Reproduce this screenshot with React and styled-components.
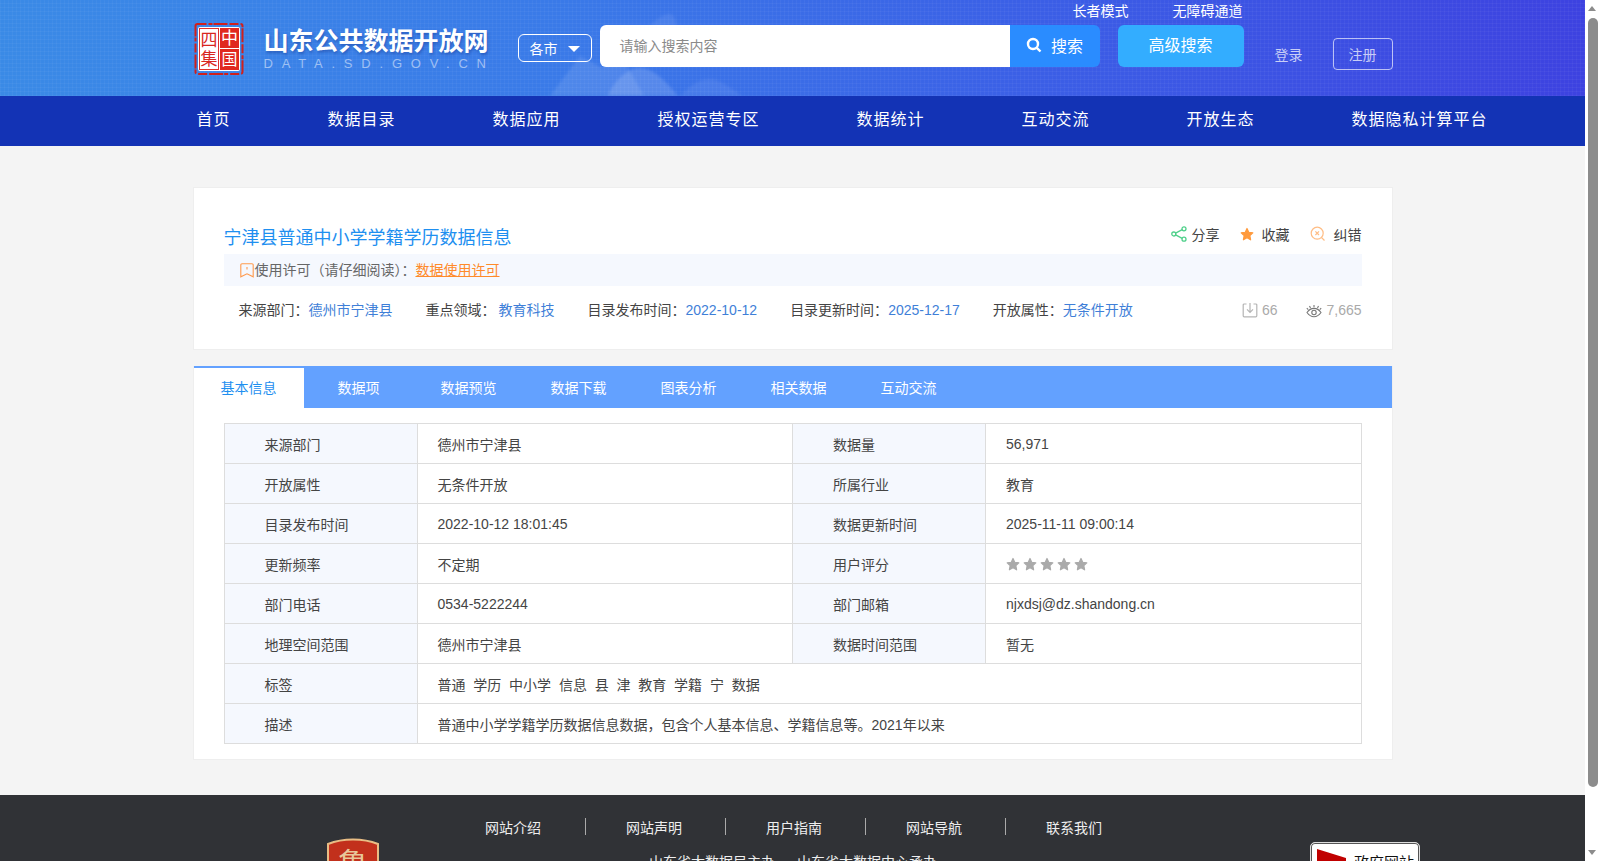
import React from "react";
import styled, { createGlobalStyle } from "styled-components";

const GlobalStyle = createGlobalStyle`
	html, body {
		margin: 0;
		height: 861px;
		overflow: hidden;
		background: #f4f4f4;
		font-family: "Liberation Sans", "Noto Sans CJK SC", sans-serif;
		font-size: 14px;
		color: #444;
	}
	* {
		box-sizing: border-box;
	}
`;

const navItems = [
	"首页",
	"数据目录",
	"数据应用",
	"授权运营专区",
	"数据统计",
	"互动交流",
	"开放生态",
	"数据隐私计算平台",
];

const tabs = ["基本信息", "数据项", "数据预览", "数据下载", "图表分析", "相关数据", "互动交流"];

const metaItems = [
	["来源部门：", "德州市宁津县"],
	["重点领域：", "教育科技"],
	["目录发布时间：", "2022-10-12"],
	["目录更新时间：", "2025-12-17"],
	["开放属性：", "无条件开放"],
];

const rows = [
	["来源部门", "德州市宁津县", "数据量", "56,971"],
	["开放属性", "无条件开放", "所属行业", "教育"],
	["目录发布时间", "2022-10-12 18:01:45", "数据更新时间", "2025-11-11 09:00:14"],
	["更新频率", "不定期", "用户评分", "stars"],
	["部门电话", "0534-5222244", "部门邮箱", "njxdsj@dz.shandong.cn"],
	["地理空间范围", "德州市宁津县", "数据时间范围", "暂无"],
];

const tags = ["普通", "学历", "中小学", "信息", "县", "津", "教育", "学籍", "宁", "数据"];

const footerLinks = ["网站介绍", "网站声明", "用户指南", "网站导航", "联系我们"];

const Shell = styled.div`
	display: flex;
	width: 1600px;
	height: 861px;
`;

const Main = styled.div`
	width: 1585px;
	height: 861px;
	overflow: hidden;
`;

const ScrollTrack = styled.div`
	position: relative;
	width: 15px;
	height: 861px;
	background: #fff;
`;

const ScrollArrow = styled.div`
	position: absolute;
	left: 3px;
	${(p) => (p.$down ? "bottom: 6px;" : "top: 6px;")}
	width: 0;
	height: 0;
	border-left: 4.5px solid transparent;
	border-right: 4.5px solid transparent;
	${(p) => (p.$down ? "border-top: 5px solid #8c8c8c;" : "border-bottom: 5px solid #8c8c8c;")}
`;

const ScrollThumb = styled.div`
	position: absolute;
	left: 3px;
	top: 18px;
	width: 10px;
	height: 769px;
	border-radius: 5px;
	background: #8c8c8c;
`;

const Header = styled.header`
	position: relative;
	height: 96px;
	overflow: hidden;
	background-color: #3a60e6;
	background-image: repeating-linear-gradient(0deg, rgba(255, 255, 255, 0.035) 0 1px, transparent 1px 4px),
		repeating-linear-gradient(90deg, rgba(255, 255, 255, 0.035) 0 1px, transparent 1px 4px),
		linear-gradient(90deg, #3a8ae6 0%, #3a7ae8 35%, #3b5fe6 65%, #3d42e0 100%);
`;

const Watermark = styled.svg`
	position: absolute;
	left: 540px;
	top: 0;
	width: 260px;
	height: 96px;
`;

const HeaderInner = styled.div`
	position: relative;
	display: flex;
	align-items: flex-start;
	width: 1200px;
	height: 96px;
	margin: 0 auto;
`;

const Seal = styled.svg`
	flex: none;
	width: 50px;
	height: 54px;
	margin: 22px 0 0 1px;
`;

const Brand = styled.div`
	flex: none;
	width: 226px;
	margin: 26px 0 0 20px;
	color: #fff;
`;

const BrandName = styled.div`
	font-size: 25px;
	line-height: 30px;
	font-weight: 700;
	white-space: nowrap;
	letter-spacing: 0;
	text-shadow: 1px 2px 3px rgba(20, 50, 140, 0.45);
`;

const BrandSub = styled.div`
	margin-top: 1px;
	font-size: 13px;
	line-height: 14px;
	letter-spacing: 8.8px;
	white-space: nowrap;
	color: rgba(255, 255, 255, 0.5);
`;

const CitySelect = styled.div`
	flex: none;
	display: flex;
	align-items: center;
	justify-content: space-between;
	width: 74px;
	height: 28px;
	margin: 34px 0 0 28px;
	padding: 0 11px;
	border: 1px solid #fff;
	border-radius: 6px;
	color: #fff;
	font-size: 14px;
`;

const Caret = styled.span`
	width: 0;
	height: 0;
	margin-top: 2px;
	border-left: 6px solid transparent;
	border-right: 6px solid transparent;
	border-top: 6px solid #fff;
`;

const SearchArea = styled.div`
	flex: none;
	width: 644px;
	margin-left: 8px;
`;

const TopLinks = styled.div`
	display: flex;
	justify-content: flex-end;
	gap: 44px;
	height: 25px;
	padding-right: 1px;
	line-height: 22px;
	color: #fff;
`;

const SearchRow = styled.div`
	display: flex;
	height: 42px;
`;

const SearchInput = styled.div`
	display: flex;
	align-items: center;
	width: 410px;
	padding: 0 0 2px 20px;
	border-radius: 6px 0 0 6px;
	background: #fff;
	color: #8a8a8a;
`;

const SearchButton = styled.div`
	display: flex;
	align-items: center;
	justify-content: center;
	gap: 9px;
	width: 90px;
	padding-bottom: 2px;
	border-radius: 0 6px 6px 0;
	background: #2a8cff;
	color: #fff;
	font-size: 16px;
`;

const AdvancedButton = styled.div`
	display: flex;
	align-items: center;
	justify-content: center;
	width: 126px;
	margin-left: 18px;
	padding-bottom: 4px;
	border-radius: 6px;
	background: #33adff;
	color: #fff;
	font-size: 16px;
`;

const AuthArea = styled.div`
	flex: none;
	display: flex;
	align-items: center;
	margin: 38px 0 0 31px;
	color: rgba(255, 255, 255, 0.72);
`;

const RegisterButton = styled.div`
	display: flex;
	align-items: center;
	justify-content: center;
	width: 60px;
	height: 32px;
	margin-left: 30px;
	border: 1px solid rgba(255, 255, 255, 0.65);
	border-radius: 4px;
`;

const Nav = styled.nav`
	height: 50px;
	background: #1333b5;
`;

const NavInner = styled.div`
	display: flex;
	gap: 97px;
	width: 1200px;
	height: 50px;
	margin: 0 auto;
	padding-left: 4px;
	line-height: 47px;
	color: #fff;
	font-size: 16px;
	letter-spacing: 1px;
	white-space: nowrap;
`;

const Content = styled.main`
	width: 1200px;
	margin: 0 auto;
	padding-top: 41px;
`;

const InfoCard = styled.section`
	height: 163px;
	padding: 36px 30px 0;
	border: 1px solid #eee;
	background: #fff;
`;

const TitleRow = styled.div`
	display: flex;
	align-items: center;
	justify-content: space-between;
	height: 28px;
	margin-bottom: 2px;
`;

const Title = styled.h1`
	margin: 0;
	font-size: 18px;
	line-height: 28px;
	font-weight: 400;
	color: #1e8ff0;
`;

const Actions = styled.div`
	display: flex;
	gap: 20px;
	margin-top: -9px;
	color: #444;
`;

const Action = styled.div`
	display: flex;
	align-items: center;
	gap: ${(p) => p.$gap}px;
`;

const LicenseBar = styled.div`
	display: flex;
	align-items: center;
	height: 32px;
	padding-left: 16px;
	background: #f5f8fe;
	color: #666;
	line-height: 32px;

	svg {
		margin-right: 1px;
	}
`;

const LicenseLink = styled.a`
	color: #ff8a2a;
	text-decoration: underline;
`;

const MetaRow = styled.div`
	display: flex;
	align-items: center;
	gap: 33px;
	height: 46px;
	padding-left: 15px;
	white-space: nowrap;

	> span:nth-child(2) > span {
		margin-left: 3px;
	}
`;

const MetaValue = styled.span`
	color: #3f7fd8;
`;

const Stats = styled.div`
	display: flex;
	align-items: center;
	gap: 29px;
	margin: 1px 0 0 auto;
	color: #aaa;
`;

const Stat = styled.div`
	display: flex;
	align-items: center;
	gap: 4px;
`;

const DetailCard = styled.section`
	height: 394px;
	margin-top: 16px;
	border: 1px solid #eee;
	border-top: 0;
	background: #fff;
`;

const TabBar = styled.div`
	display: flex;
	height: 42px;
	background: #63a1ff;
`;

const Tab = styled.div`
	width: 110px;
	margin-top: 2px;
	text-align: center;
	line-height: 40px;
	background: ${(p) => (p.$active ? "#fff" : "transparent")};
	color: ${(p) => (p.$active ? "#1e8ff0" : "#fff")};
`;

const Table = styled.table`
	width: 1137px;
	margin: 15px 0 0 30px;
	border-collapse: collapse;
	table-layout: fixed;

	td:nth-child(3) {
		padding-left: 40.5px;
	}
	td:nth-child(4) {
		padding-left: 20.5px;
	}
`;

const Label = styled.td`
	height: 40px;
	padding: 0 0 0 40px;
	border: 1px solid #ddd;
	background: #f5f8fe;
	color: #444;
`;

const Value = styled.td`
	height: 40px;
	padding: 0 0 0 20px;
	border: 1px solid #ddd;
	color: #444;
`;

const Tags = styled.div`
	display: flex;
	gap: 7.8px;
`;

const Stars = styled.div`
	display: flex;
	gap: 3px;
`;

const Footer = styled.footer`
	display: flex;
	align-items: flex-start;
	height: 140px;
	margin-top: 35px;
	padding-left: 327px;
	background: #303236;
`;

const FooterLogo = styled.svg`
	flex: none;
	width: 52px;
	height: 66px;
	margin-top: 43px;
`;

const FooterCenter = styled.div`
	flex: none;
	width: 694px;
	margin: 23px 0 0 67px;
	color: #fff;
`;

const FooterLinks = styled.div`
	display: flex;
`;

const FooterLink = styled.a`
	flex: none;
	width: ${(p) => (p.$first ? 140 : 140)}px;
	height: 17px;
	padding-left: ${(p) => (p.$first ? 39 : 40)}px;
	line-height: 20px;
	color: #eee;
	white-space: nowrap;
	border-right: ${(p) => (p.$last ? "none" : "1px solid #aaa")};
`;

const FooterLine = styled.div`
	display: flex;
	justify-content: center;
	gap: 22px;
	margin-top: 16px;
	color: #eee;
`;

const GovBadge = styled.div`
	flex: none;
	display: flex;
	align-items: flex-start;
	gap: 8px;
	width: 110px;
	height: 70px;
	margin: 47px 0 0 170px;
	padding: 6px 6px;
	border: 1px solid #ddd;
	border-radius: 5px;
	background: #fff;
	box-shadow: inset 0 0 0 1px #555, inset 0 0 0 2px #fff;
	color: #111;
	font-size: 15px;
	line-height: 22px;
	white-space: nowrap;

	span {
		margin-top: 3px;
	}
`;

const ShareIcon = () => (
	<svg width="16" height="16" viewBox="0 0 16 16" fill="none" stroke="#4fd08a" strokeWidth="1.3">
		<circle cx="2.8" cy="8" r="2" />
		<circle cx="13" cy="2.8" r="2" />
		<circle cx="13" cy="13.2" r="2" />
		<path d="M4.6 7.1 11.2 3.7M4.6 8.9l6.6 3.4" />
	</svg>
);

const StarIcon = ({ size = 14, color = "#ff9a3d" }) => (
	<svg width={size} height={size} viewBox="0 0 24 24" fill={color} stroke={color} strokeWidth="2" strokeLinejoin="round">
		<path d="M12 2.500l3 6.500 7 1-5.100 4.900 1.300 7.100L12 18.600l-6.200 3.400 1.300-7.100L2 10l7-1z" />
	</svg>
);

const CorrectIcon = () => (
	<svg width="16" height="16" viewBox="0 0 16 16" fill="none" stroke="#ffbd85" strokeWidth="1.2">
		<circle cx="7.2" cy="7.2" r="6" />
		<path d="M5.4 5.4l3.6 3.6M9 5.4L5.4 9M11.5 11.5l3 3" />
	</svg>
);

const DownloadIcon = () => (
	<svg width="16" height="16" viewBox="0 0 16 16" fill="none" stroke="#b5b5b5" strokeWidth="1.2">
		<path d="M4.5 2H2.2A1 1 0 0 0 1.2 3v10.8a1 1 0 0 0 1 1h11.6a1 1 0 0 0 1-1V3a1 1 0 0 0-1-1h-2.3" />
		<path d="M8 1v9M5 7.4 8 10.4l3-3" />
	</svg>
);

const EyeIcon = () => (
	<svg width="16" height="15" viewBox="0 0 16 15" fill="none" stroke="#777" strokeWidth="1.1" style={{ marginTop: 3 }}>
		<path d="M1 8.5C3 5.6 5.3 4.4 8 4.4s5 1.2 7 4.100c-2 2.800-4.300 4.200-7 4.200S3 11.300 1 8.500z" />
		<circle cx="8" cy="8.500" r="2.200" />
		<path d="M8 1v2.200M3.500 2l1 2M12.500 2l-1 2M.8 4.200l1.500 1.400M15.200 4.200l-1.500 1.400" />
	</svg>
);

const BookmarkIcon = () => (
	<svg width="14" height="15" viewBox="0 0 14 15" fill="none" stroke="#ff9a4d" strokeWidth="1.1" style={{ flex: "none" }}>
		<path d="M2 .8h10a1.200 1.200 0 0 1 1.200 1.200v11.800L7 10.800.8 13.800V2A1.200 1.200 0 0 1 2 .8z" />
		<path d="M7 4v2.500" />
	</svg>
);

const SealLogo = () => (
	<Seal viewBox="0 0 50 54">
		<rect x="1.500" y="2" width="47" height="50" rx="2" fill="none" stroke="#d0201c" strokeWidth="2" strokeDasharray="9 2 4 1 14 2" />
		<rect x="4" y="5" width="42" height="44" rx="2" fill="#fff" />
		<rect x="5.500" y="6.500" width="19" height="41" fill="none" stroke="#e0322c" strokeWidth="1" />
		<rect x="26" y="6" width="19" height="20" fill="#e0281f" />
		<rect x="26" y="27" width="19" height="21" fill="#e0281f" />
		<text x="15" y="24" textAnchor="middle" fontSize="17" fill="#d8261f">四</text>
		<text x="15" y="43" textAnchor="middle" fontSize="17" fill="#d8261f">集</text>
		<text x="35.500" y="22" textAnchor="middle" fontSize="17" fill="#fff">中</text>
		<text x="35.500" y="43" textAnchor="middle" fontSize="16" fill="#fff">国</text>
	</Seal>
);

const App = () => {
	return (
		<Shell>
			<GlobalStyle />
			<Main>
				<Header>
					<Watermark viewBox="0 0 260 96">
						<defs>
							<filter id="soft">
								<feGaussianBlur stdDeviation="1.500" />
							</filter>
						</defs>
						<g fill="#fff" filter="url(#soft)">
							<path opacity="0.1" d="M10 96 40 56l22 12 16-18 26 46z" />
							<path opacity="0.08" d="M100 40c8-16 22-26 30-26 8 2 4 14 12 18 12 4 24 0 28 8-8 10-24 10-30 16-8 10-26 6-40-16z" />
							<path opacity="0.14" d="M68 96c6-16 22-30 34-28 14 2 26 16 36 28z" />
							<path opacity="0.07" d="M140 96c10-10 22-20 36-16 10 4 18 10 26 16z" />
						</g>
					</Watermark>
					<HeaderInner>
						<SealLogo />
						<Brand>
							<BrandName>山东公共数据开放网</BrandName>
							<BrandSub>DATA.SD.GOV.CN</BrandSub>
						</Brand>
						<CitySelect>
							各市
							<Caret />
						</CitySelect>
						<SearchArea>
							<TopLinks>
								<span>长者模式</span>
								<span>无障碍通道</span>
							</TopLinks>
							<SearchRow>
								<SearchInput>请输入搜索内容</SearchInput>
								<SearchButton>
									<svg width="16" height="16" viewBox="0 0 16 16" fill="none" stroke="#fff" strokeWidth="2.400">
										<circle cx="7" cy="7" r="5" />
										<path d="M10.800 10.800 14.500 14.500" />
									</svg>
									搜索
								</SearchButton>
								<AdvancedButton>高级搜索</AdvancedButton>
							</SearchRow>
						</SearchArea>
						<AuthArea>
							<span>登录</span>
							<RegisterButton>注册</RegisterButton>
						</AuthArea>
					</HeaderInner>
				</Header>
				<Nav>
					<NavInner>
						{navItems.map((item) => (
							<span key={item}>{item}</span>
						))}
					</NavInner>
				</Nav>
				<Content>
					<InfoCard>
						<TitleRow>
							<Title>宁津县普通中小学学籍学历数据信息</Title>
							<Actions>
								<Action $gap={5}>
									<ShareIcon />
									分享
								</Action>
								<Action $gap={8}>
									<StarIcon />
									收藏
								</Action>
								<Action $gap={8}>
									<CorrectIcon />
									纠错
								</Action>
							</Actions>
						</TitleRow>
						<LicenseBar>
							<BookmarkIcon />
							使用许可（请仔细阅读）：
							<LicenseLink>数据使用许可</LicenseLink>
						</LicenseBar>
						<MetaRow>
							{metaItems.map(([key, value]) => (
								<span key={key}>
									{key}
									<MetaValue>{value}</MetaValue>
								</span>
							))}
							<Stats>
								<Stat>
									<DownloadIcon />
									66
								</Stat>
								<Stat>
									<EyeIcon />
									7,665
								</Stat>
							</Stats>
						</MetaRow>
					</InfoCard>
					<DetailCard>
						<TabBar>
							{tabs.map((tab, i) => (
								<Tab key={tab} $active={i === 0}>
									{tab}
								</Tab>
							))}
						</TabBar>
						<Table>
							<colgroup>
								<col width="193" />
								<col width="375" />
								<col width="193" />
								<col width="376" />
							</colgroup>
							<tbody>
								{rows.map((r) => (
									<tr key={r[0]}>
										<Label>{r[0]}</Label>
										<Value>{r[1]}</Value>
										<Label>{r[2]}</Label>
										<Value>
											{r[3] === "stars" ? (
												<Stars>
													{[0, 1, 2, 3, 4].map((n) => (
														<StarIcon key={n} color="#aaa" />
													))}
												</Stars>
											) : (
												r[3]
											)}
										</Value>
									</tr>
								))}
								<tr>
									<Label>标签</Label>
									<Value colSpan="3">
										<Tags>
											{tags.map((t) => (
												<span key={t}>{t}</span>
											))}
										</Tags>
									</Value>
								</tr>
								<tr>
									<Label>描述</Label>
									<Value colSpan="3">普通中小学学籍学历数据信息数据，包含个人基本信息、学籍信息等。2021年以来</Value>
								</tr>
							</tbody>
						</Table>
					</DetailCard>
				</Content>
				<Footer>
					<FooterLogo viewBox="0 0 52 66">
						<path d="M1 6C16 0 36 0 51 6v40c0 10-14 16-25 19C15 62 1 56 1 46z" fill="#c2301c" stroke="#e8bd85" strokeWidth="2" />
						<text x="26" y="36" textAnchor="middle" fontSize="30" fill="#e8c79a">鲁</text>
					</FooterLogo>
					<FooterCenter>
						<FooterLinks>
							{footerLinks.map((link, i) => (
								<FooterLink key={link} $first={i === 0} $last={i === footerLinks.length - 1}>
									{link}
								</FooterLink>
							))}
						</FooterLinks>
						<FooterLine>
							<span>山东省大数据局主办</span>
							<span>山东省大数据中心承办</span>
						</FooterLine>
					</FooterCenter>
					<GovBadge>
						<svg width="29" height="30" viewBox="0 0 29 30" style={{ flex: "none" }}>
							<path d="M0 0l29 9v21H0z" fill="#c00000" />
							<path d="M9 17c4-5 12-5 16-1M12 21c3-3 8-3 11 0" fill="none" stroke="#fff" strokeWidth="2" />
						</svg>
						<span>政府网站</span>
					</GovBadge>
				</Footer>
			</Main>
			<ScrollTrack>
				<ScrollArrow />
				<ScrollThumb />
				<ScrollArrow $down />
			</ScrollTrack>
		</Shell>
	);
};

export default App;
